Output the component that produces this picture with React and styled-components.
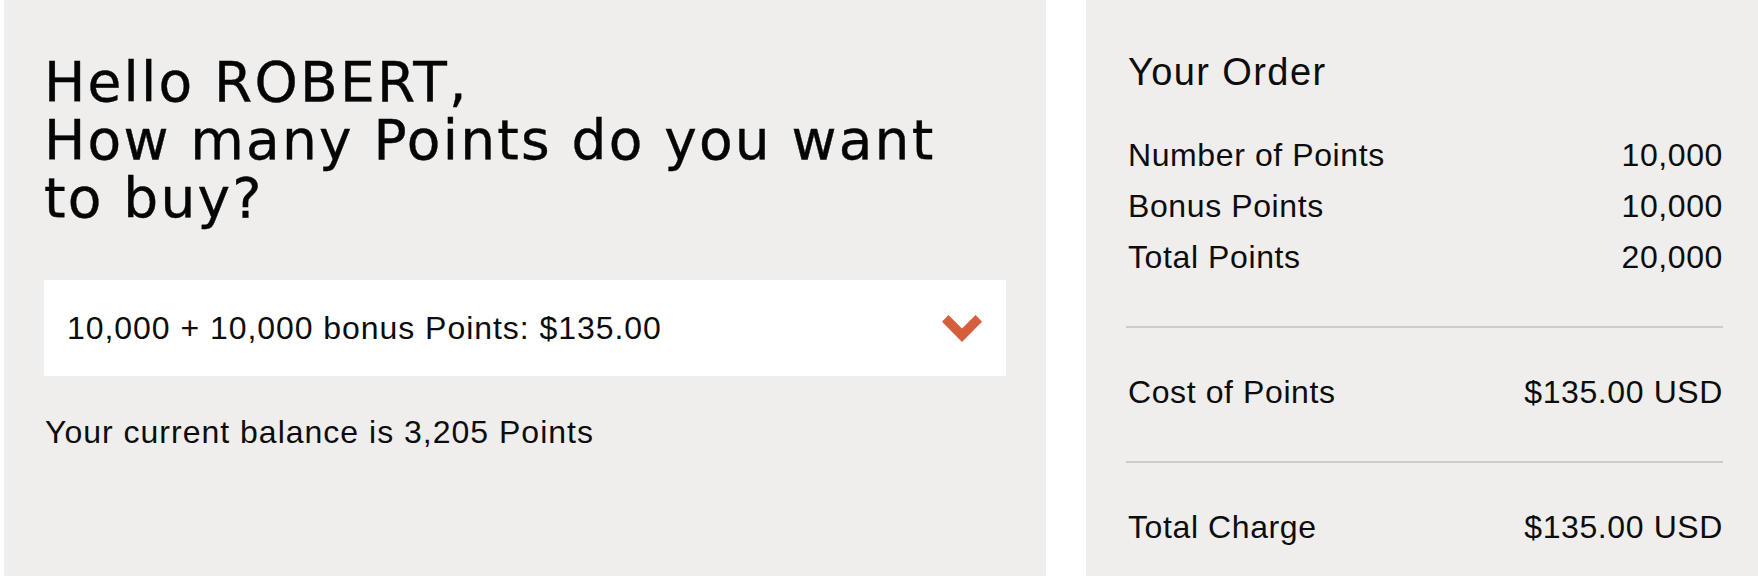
import styled, { createGlobalStyle } from "styled-components";

const GlobalStyle = createGlobalStyle`
  html, body {
    margin: 0;
    padding: 0;
    background: #ffffff;
  }
  body {
    font-family: "Liberation Sans", Arial, sans-serif;
    color: #0d0d0d;
  }
`;

const Page = styled.div`
  display: flex;
  gap: 40px;
  height: 100vh;
  padding-left: 4px;
  box-sizing: border-box;
  overflow: hidden;
`;

const Panel = styled.section`
  background: #efeeec;
  box-sizing: border-box;
  height: 100%;
`;

const BuyPanel = styled(Panel)`
  width: 1042px;
  flex-shrink: 0;
  padding: 53px 40px 0 40px;
`;

const OrderPanel = styled(Panel)`
  flex: 1;
  padding: 50px 35px 0 40px;
`;

const Heading = styled.h1`
  margin: 0;
  font-family: "DejaVu Sans", sans-serif;
  font-weight: 400;
  font-size: 55px;
  line-height: 58px;
  letter-spacing: 2.2px;
  color: #050505;
  -webkit-text-stroke: 0.4px #050505;
`;

const Select = styled.button`
  margin-top: 53px;
  width: 100%;
  height: 96px;
  display: flex;
  align-items: center;
  justify-content: space-between;
  padding: 0 24px 0 23px;
  box-sizing: border-box;
  background: #fff;
  border: none;
  font-family: "Liberation Sans", Arial, sans-serif;
  font-size: 32px;
  letter-spacing: 0.95px;
  color: #0d0d0d;
  cursor: pointer;
`;

const Chevron = () => (
  <svg width="40" height="27" viewBox="0 0 40 27">
    <polygon points="0,6.7 6.4,0 20,13.6 33.6,0 40,6.7 20,27" fill="#d55f3c" />
  </svg>
);

const Balance = styled.p`
  margin: 36px 0 0 1px;
  font-size: 32px;
  line-height: 41.6px;
  letter-spacing: 1px;
`;

const OrderTitle = styled.h2`
  margin: 0 0 36px 2px;
  font-weight: 400;
  font-size: 38px;
  line-height: 44.4px;
  letter-spacing: 1.4px;
`;

const Row = styled.div`
  display: flex;
  justify-content: space-between;
  padding-left: 2px;
  font-size: 32px;
  line-height: 51px;
  letter-spacing: 0.6px;
`;

const Divider = styled.hr`
  margin: 43px 0 39px;
  border: none;
  height: 2px;
  background: #cdcccb;
`;

const lines = [
  ["Number of Points", "10,000"],
  ["Bonus Points", "10,000"],
  ["Total Points", "20,000"],
];

export default function App() {
  return (
    <>
      <GlobalStyle />
      <Page>
        <BuyPanel>
          <Heading>
            Hello ROBERT,
            <br />
            How many Points do you want
            <br />
            to buy?
          </Heading>
          <Select>
            <span>10,000 + 10,000 bonus Points: $135.00</span>
            <Chevron />
          </Select>
          <Balance>Your current balance is 3,205 Points</Balance>
        </BuyPanel>
        <OrderPanel>
          <OrderTitle>Your Order</OrderTitle>
          {lines.map(([label, value]) => (
            <Row key={label}>
              <span>{label}</span>
              <span>{value}</span>
            </Row>
          ))}
          <Divider />
          <Row>
            <span>Cost of Points</span>
            <span>$135.00 USD</span>
          </Row>
          <Divider />
          <Row>
            <span>Total Charge</span>
            <span>$135.00 USD</span>
          </Row>
        </OrderPanel>
      </Page>
    </>
  );
}
